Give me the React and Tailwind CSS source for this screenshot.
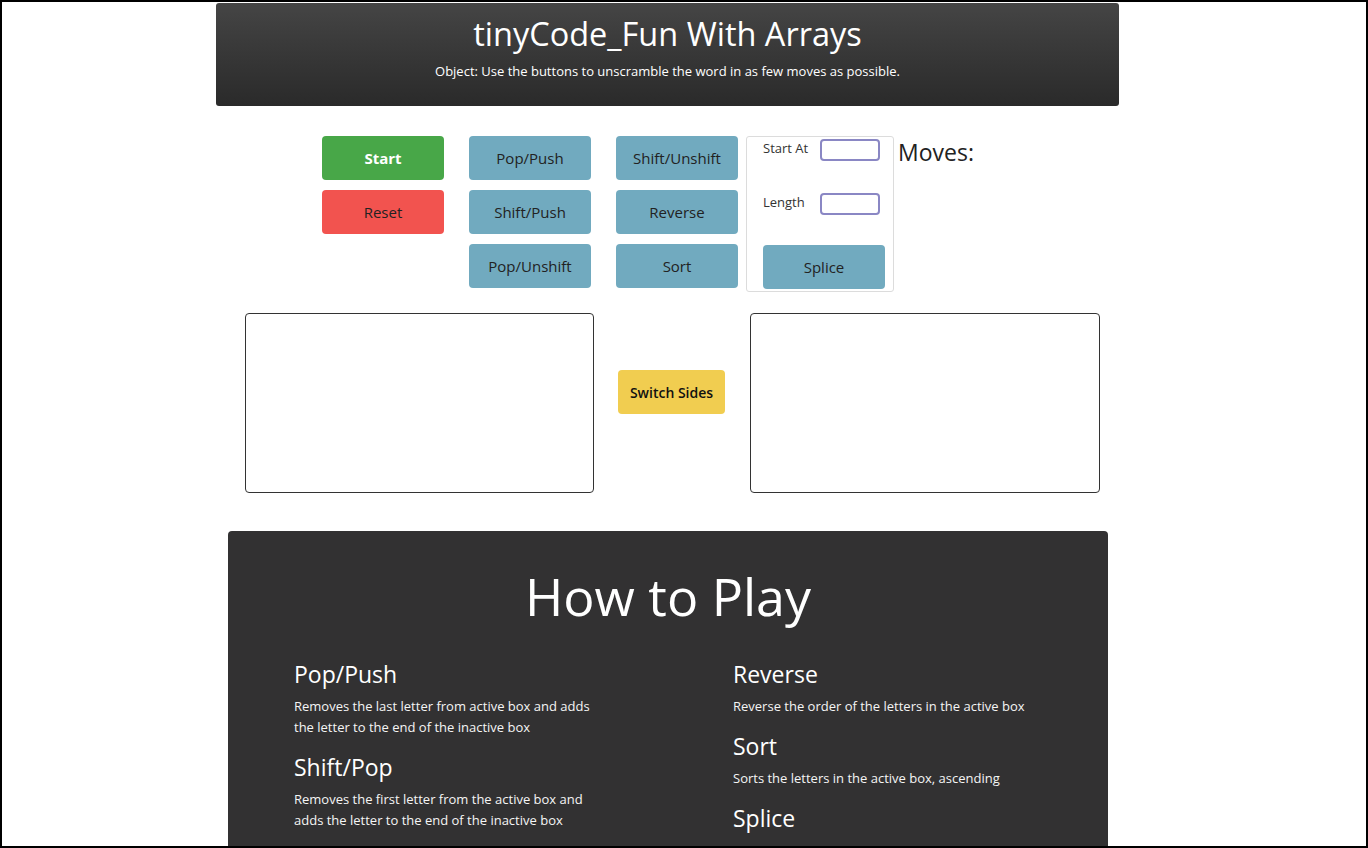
import React from 'react';

const font = { fontFamily: '"Open Sans", "Noto Sans", sans-serif' };

const ArrayButton = ({ label, className = '' }) => (
  <button className={`w-[122px] h-[44px] rounded-[4px] bg-[#71aabf] text-[#222] text-[15px] ${className}`}>
    {label}
  </button>
);

const rules = {
  left: [
    { title: 'Pop/Push', text: 'Removes the last letter from active box and adds the letter to the end of the inactive box' },
    { title: 'Shift/Pop', text: 'Removes the first letter from the active box and adds the letter to the end of the inactive box' },
  ],
  right: [
    { title: 'Reverse', text: 'Reverse the order of the letters in the active box' },
    { title: 'Sort', text: 'Sorts the letters in the active box, ascending' },
    { title: 'Splice' },
  ],
};

const Rule = ({ title, text }) => (
  <div className="mb-[13px]">
    <h3 className="text-[23px] leading-[32px] mb-[6px] text-white">{title}</h3>
    {text && <p className="text-[13px] leading-[21px] text-[#f5f5f5] w-[305px]">{text}</p>}
  </div>
);

const App = () => {
  return (
    <div className="w-[1368px] h-[848px] border-2 border-black bg-white overflow-hidden" style={font}>
      <div className="w-[903px] ml-[214px]">
        {/* header */}
        <div className="mt-px h-[103px] rounded-[3px] bg-gradient-to-b from-[#454545] to-[#2a2a2a] flex flex-col items-center text-white">
          <h1 className="text-[32.5px] leading-[40px] mt-[11px]">tinyCode_Fun With Arrays</h1>
          <p className="text-[13px] leading-[20px] mt-[7px]">Object: Use the buttons to unscramble the word in as few moves as possible.</p>
        </div>

        {/* controls */}
        <div className="flex items-start mt-[30px] ml-[106px]">
          <div className="flex flex-col gap-[10px]">
            <button className="w-[122px] h-[44px] rounded-[4px] bg-[#48a748] text-white font-bold text-[15px]">Start</button>
            <button className="w-[122px] h-[44px] rounded-[4px] bg-[#f2534f] text-[#222] text-[15px]">Reset</button>
          </div>
          <div className="flex flex-col gap-[10px] ml-[25px]">
            <ArrayButton label="Pop/Push" />
            <ArrayButton label="Shift/Push" />
            <ArrayButton label="Pop/Unshift" />
          </div>
          <div className="flex flex-col gap-[10px] ml-[25px]">
            <ArrayButton label="Shift/Unshift" />
            <ArrayButton label="Reverse" />
            <ArrayButton label="Sort" />
          </div>
          <div className="ml-[8px] w-[148px] h-[156px] border border-[#dcdcdc] rounded-[3px] pl-[16px] pt-[2px] flex flex-col">
            <div className="flex items-start h-[54px]">
              <span className="text-[13px] text-[#333] w-[57px]">Start At</span>
              <input className="w-[60px] h-[22px] border-2 border-[#8a87c4] rounded-[4px] outline-none" />
            </div>
            <div className="flex items-start h-[52px]">
              <span className="text-[13px] text-[#333] w-[57px]">Length</span>
              <input className="w-[60px] h-[22px] border-2 border-[#8a87c4] rounded-[4px] outline-none" />
            </div>
            <ArrayButton label="Splice" />
          </div>
          <div className="ml-[4px] text-[23px] leading-[32px] text-[#222]">Moves:</div>
        </div>

        {/* letter boxes */}
        <div className="flex items-start mt-[21px] ml-[29px]">
          <div className="w-[349px] h-[180px] border border-[#333] rounded-[4px]"></div>
          <button className="ml-[24px] mt-[57px] w-[107px] h-[44px] rounded-[4px] bg-[#f1cd50] text-[#111] text-[14px] font-semibold">Switch Sides</button>
          <div className="ml-[25px] w-[350px] h-[180px] border border-[#333] rounded-[4px]"></div>
        </div>

        {/* how to play */}
        <div className="mt-[38px] ml-[12px] w-[880px] h-[400px] rounded-t-[4px] bg-[#323132] pt-[33px]">
          <h2 className="text-[52px] leading-[64px] text-white text-center font-normal">How to Play</h2>
          <div className="flex mt-[30px] pl-[66px]">
            <div className="w-[439px]">
              {rules.left.map((r) => <Rule key={r.title} {...r} />)}
            </div>
            <div>
              {rules.right.map((r) => <Rule key={r.title} {...r} />)}
            </div>
          </div>
        </div>
      </div>
    </div>
  );
};

export default App;
